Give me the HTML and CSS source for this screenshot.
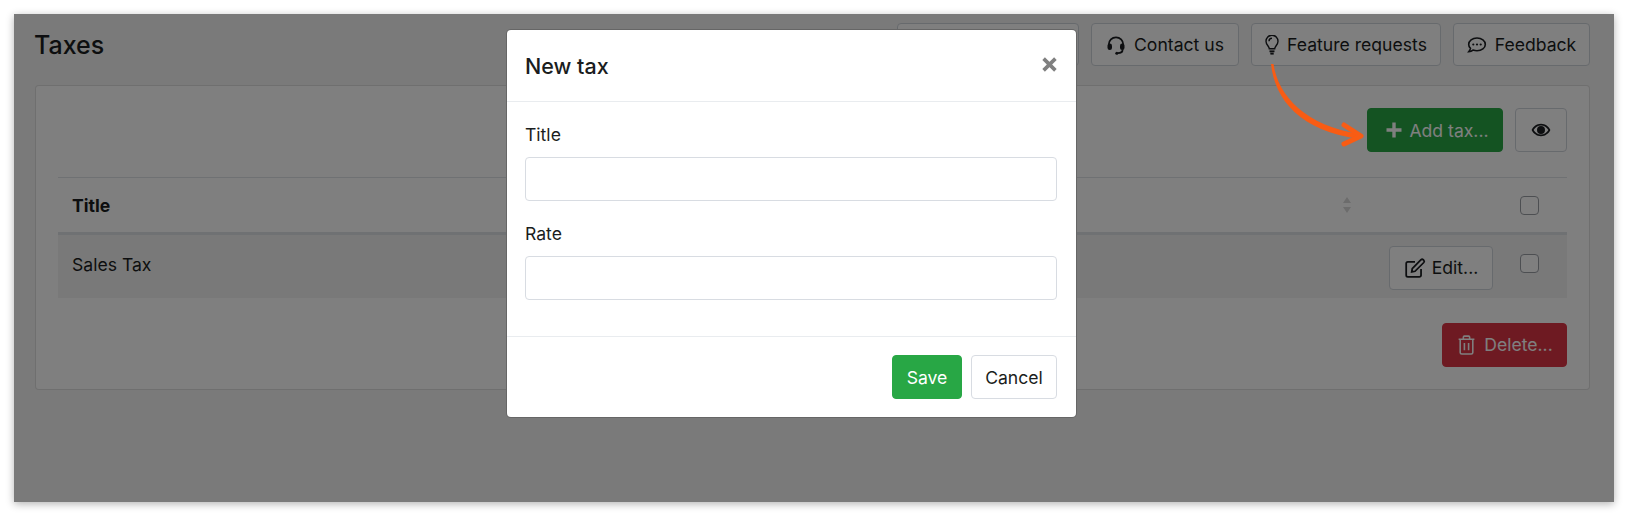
FILE: index.html
```html
<!DOCTYPE html>
<html>
<head>
  <meta charset="utf-8">
  <title>Taxes</title>
  <link rel="stylesheet" href="styles.css">
</head>
<body>
  <div class="screen">
    <header class="top">
      <h1>Taxes</h1>
      <nav class="top-links">
        <a class="btn btn-blank"></a>
        <a class="btn btn-contact">
          <svg class="icon" viewBox="0 0 20 20" fill="none" stroke="currentColor" stroke-width="1.8"><path d="M2.800 11V9.500a7.200 7.200 0 0 1 14.400 0V11"/><rect x="1.500" y="8.500" width="4.500" height="6.500" rx="2.200" fill="currentColor" stroke="none"/><rect x="14" y="8.500" width="4.500" height="6.500" rx="2.200" fill="currentColor" stroke="none"/><path d="M16.600 14.500c0 2.500-2 3.700-5 3.700"/><circle cx="10.800" cy="18.200" r="1.500" fill="currentColor" stroke="none"/></svg>
          Contact us
        </a>
        <a class="btn btn-feature">
          <svg class="icon icon-bulb" viewBox="0 0 14 20" fill="none" stroke="currentColor" stroke-width="1.400"><path d="M4.300 13.800c0-2.600-3.300-3.800-3.300-7.600a6 6 0 0 1 12 0c0 3.800-3.300 5-3.300 7.600z"/><path d="M7 3.200c-1.900 0-3 1.300-3 3"/><path d="M4.500 16.300h5" stroke-width="1.800"/><path d="M5.300 18.600h3.400" stroke-width="2"/></svg>
          Feature requests
        </a>
        <a class="btn btn-feedback">
          <svg class="icon" viewBox="0 0 20 20" fill="none" stroke="currentColor" stroke-width="1.600"><path d="M10 3c-4.700 0-8.300 2.900-8.300 6.400 0 1.500.7 2.900 1.800 4-.3 1.300-1.100 2.500-1.800 3.300 1.700 0 3.300-.7 4.300-1.600 1.200.4 2.600.7 4 .7 4.700 0 8.300-2.900 8.300-6.400S14.700 3 10 3z"/><circle cx="6.300" cy="9.500" r="1.100" fill="currentColor" stroke="none"/><circle cx="10" cy="9.500" r="1.100" fill="currentColor" stroke="none"/><circle cx="13.700" cy="9.500" r="1.100" fill="currentColor" stroke="none"/></svg>
          Feedback
        </a>
      </nav>
    </header>

    <section class="card">
      <div class="toolbar">
        <a class="btn btn-green">
          <svg class="icon" viewBox="0 0 20 20" fill="none" stroke="currentColor" stroke-width="3.400"><path d="M10 2.500v15M2.500 10h15"/></svg>
          Add tax...
        </a>
        <a class="btn btn-eye">
          <svg class="icon" viewBox="0 0 20 20"><path fill="currentColor" fill-rule="evenodd" d="M10 3.800c4.300 0 7.800 2.800 9.400 6.200-1.600 3.400-5.100 6.200-9.400 6.200S2.200 13.400.6 10C2.200 6.600 5.700 3.800 10 3.800zM10 5.500c-3.200 0-5.900 1.900-7.400 4.500 1.500 2.600 4.200 4.500 7.400 4.500s5.900-1.900 7.400-4.500C15.900 7.400 13.200 5.500 10 5.500zM10 6a4 4 0 1 1 0 8 4 4 0 0 1 0-8z"/></svg>
        </a>
      </div>

      <table class="taxes">
        <thead>
          <tr>
            <th>Title</th>
            <th class="col-sort"><span class="sort"><i class="up"></i><i class="down"></i></span></th>
            <th class="col-check"><span class="check"></span></th>
          </tr>
        </thead>
        <tbody>
          <tr>
            <td class="col-name">Sales Tax</td>
            <td class="col-edit">
              <a class="btn btn-edit">
                <svg class="icon icon-edit" viewBox="0 0 20 20" fill="none" stroke="currentColor" stroke-width="1.600"><path d="M10 4.500H3.500a1.500 1.500 0 0 0-1.500 1.500v10.500A1.500 1.500 0 0 0 3.500 18H14a1.500 1.500 0 0 0 1.500-1.500V11"/><path d="M7.500 10.500 15.500 2.500a1.500 1.500 0 0 1 2 0l.5.500a1.500 1.500 0 0 1 0 2l-8 8-3 .5z"/></svg>
                Edit...
              </a>
            </td>
            <td class="col-check"><span class="check check-row"></span></td>
          </tr>
        </tbody>
      </table>

      <div class="card-foot">
        <a class="btn btn-red">
          <svg class="icon icon-trash" viewBox="0 0 20 20" fill="none" stroke="currentColor" stroke-width="1.500"><path d="M2.500 5h15M7 5V3a1 1 0 0 1 1-1h4a1 1 0 0 1 1 1v2M4 5v12.500A1.500 1.500 0 0 0 5.500 19h9a1.500 1.500 0 0 0 1.500-1.500V5M8 8.500v7M12 8.500v7"/></svg>
          Delete...
        </a>
      </div>
    </section>

    <div class="backdrop"></div>

    <div class="modal">
      <div class="modal-head">
        <h2>New tax</h2>
        <svg class="close" viewBox="0 0 14 14" fill="none" stroke="currentColor" stroke-width="3.400"><path d="M1.500 1.500l11 11M12.500 1.500l-11 11"/></svg>
      </div>
      <form class="modal-body">
        <label for="title">Title</label>
        <input type="text" id="title">
        <label for="rate">Rate</label>
        <input type="text" id="rate">
      </form>
      <div class="modal-foot">
        <a class="btn btn-save">Save</a>
        <a class="btn btn-cancel">Cancel</a>
      </div>
    </div>

    <!-- arrow drawn on top of the screenshot -->
    <svg class="arrow" viewBox="0 0 150 110" fill="#f85c14">
      <path d="M31 14C35 50 60 81 120 89V84C66 76 38 46 33.500 14Z"/>
      <path d="M104 75 121 86 104 94" fill="none" stroke="#f85c14" stroke-width="5" stroke-linecap="round" stroke-linejoin="round"/>
    </svg>
  </div>
</body>
</html>
```

FILE: styles.css
```css
* {
  box-sizing: border-box;
}

html, body {
  height: 516px;
  overflow: hidden;
}

body {
  margin: 0;
  padding: 14px;
  background-color: #fff;
  font-family: 'Inter', 'Liberation Sans', sans-serif;
  font-size: 17.6px;
  color: #1a1d20;
}

/* Window */
.screen {
  position: relative;
  width: 1600px;
  height: 488px;
  background-color: #f4f4f4;
  box-shadow: 0 2px 8px rgba(0, 0, 0, 0.3);
}

/* Top bar */
.top {
  display: flex;
  justify-content: space-between;
  align-items: flex-start;
  height: 52px;
  padding: 9px 24px 0 20px;
}

h1 {
  margin: 0;
  font-size: 25px;
  font-weight: 500;
  line-height: 45px;
}

.top-links {
  display: flex;
  gap: 12px;
}

/* Buttons */
.btn {
  display: inline-flex;
  align-items: center;
  justify-content: center;
  gap: 8px;
  height: 44px;
  border: 1px solid #ced4da;
  border-radius: 4px;
  background-color: #fff;
  white-space: nowrap;
}

.top-links .btn {
  height: 43px;
}

.btn-blank {
  width: 182px;
}

.btn-contact {
  width: 148px;
}

.btn-feature {
  width: 190px;
}

.btn-feedback {
  width: 137px;
}

.icon {
  width: 20px;
  height: 20px;
  flex: none;
}

.icon-bulb {
  width: 14px;
}

.icon-edit {
  width: 22px;
  height: 22px;
}

.icon-trash {
  width: 21px;
  height: 21px;
}

.btn-green {
  width: 136px;
  gap: 5px;
  padding-left: 3px;
  border-color: #28a745;
  background-color: #28a745;
  color: #fff;
}

.btn-eye {
  width: 52px;
}

.btn-edit {
  width: 104px;
  gap: 6px;
}

.btn-red {
  width: 125px;
  gap: 7px;
  border-color: #dc3545;
  background-color: #dc3545;
  color: #fff;
}

/* Card */
.card {
  margin: 19px 24px 0 21px;
  padding: 22px;
  border: 1px solid rgba(0, 0, 0, 0.125);
  border-radius: 4px;
  background-color: #fff;
}

.toolbar {
  display: flex;
  justify-content: flex-end;
  gap: 12px;
}

/* Table */
.taxes {
  width: 100%;
  margin-top: 25px;
  border-collapse: collapse;
  border-top: 1px solid #dee2e6;
}

.taxes th {
  height: 56px;
  padding: 0 14px;
  border-bottom: 3px solid #dee2e6;
  text-align: left;
  font-weight: 700;
}

.taxes td {
  height: 64px;
  padding: 0 14px;
  background-color: #f2f2f2;
}

.taxes .col-name {
  padding-bottom: 4px;
}

.taxes .col-sort {
  padding-right: 0;
}

.taxes .col-edit {
  padding: 0 27px 0 0;
}

.taxes .col-check {
  width: 47px;
  padding: 0;
}

.col-edit .btn {
  display: flex;
  margin: 3px 0 0 auto;
}

.sort {
  display: flex;
  flex-direction: column;
  gap: 4px;
  width: 8px;
  margin: 0 169px 0 auto;
}

.sort i {
  width: 0;
  height: 0;
  border-left: 4px solid transparent;
  border-right: 4px solid transparent;
}

.sort .up {
  border-bottom: 6px solid #d8d8d8;
}

.sort .down {
  border-top: 6px solid #d8d8d8;
}

.check {
  display: block;
  width: 19px;
  height: 19px;
  margin-top: 1px;
  border: 1.5px solid #9a9fa5;
  border-radius: 4px;
  background-color: #fff;
}

.check-row {
  margin-top: -6px;
}

.card-foot {
  display: flex;
  justify-content: flex-end;
  margin-top: 25px;
}

/* Modal */
.backdrop {
  position: absolute;
  inset: 0;
  background-color: rgba(0, 0, 0, 0.5);
}

.modal {
  position: absolute;
  left: 492px;
  top: 15px;
  width: 571px;
  height: 389px;
  border: 1px solid rgba(0, 0, 0, 0.6);
  border-radius: 5px;
  background-color: #fff;
}

.modal-head {
  display: flex;
  justify-content: space-between;
  align-items: center;
  height: 72px;
  padding: 0 19px 0 18px;
  border-bottom: 1px solid #e9ecef;
}

h2 {
  margin: 0;
  font-size: 21.500px;
  font-weight: 500;
}

.close {
  width: 15px;
  height: 15px;
  margin-top: -2px;
  color: #808080;
}

.modal-body {
  display: flex;
  flex-direction: column;
  height: 234px;
  padding: 20px 19px 0 18px;
}

.modal-body label {
  height: 35px;
  line-height: 25px;
}

.modal-body input {
  height: 44px;
  margin-bottom: 20px;
  border: 1.500px solid #d8dce2;
  border-radius: 4px;
  background-color: #fff;
}

.modal-foot {
  display: flex;
  justify-content: flex-end;
  gap: 9px;
  padding: 18px 19px 0 18px;
  border-top: 1px solid #e9ecef;
}

.btn-save {
  width: 70px;
  border-color: #28a745;
  background-color: #28a745;
  color: #fff;
}

.btn-cancel {
  width: 86px;
  border-width: 1.500px;
  border-color: #d8dce2;
}

/* Annotation */
.arrow {
  position: absolute;
  left: 1226px;
  top: 36px;
  width: 150px;
  height: 110px;
}
```
